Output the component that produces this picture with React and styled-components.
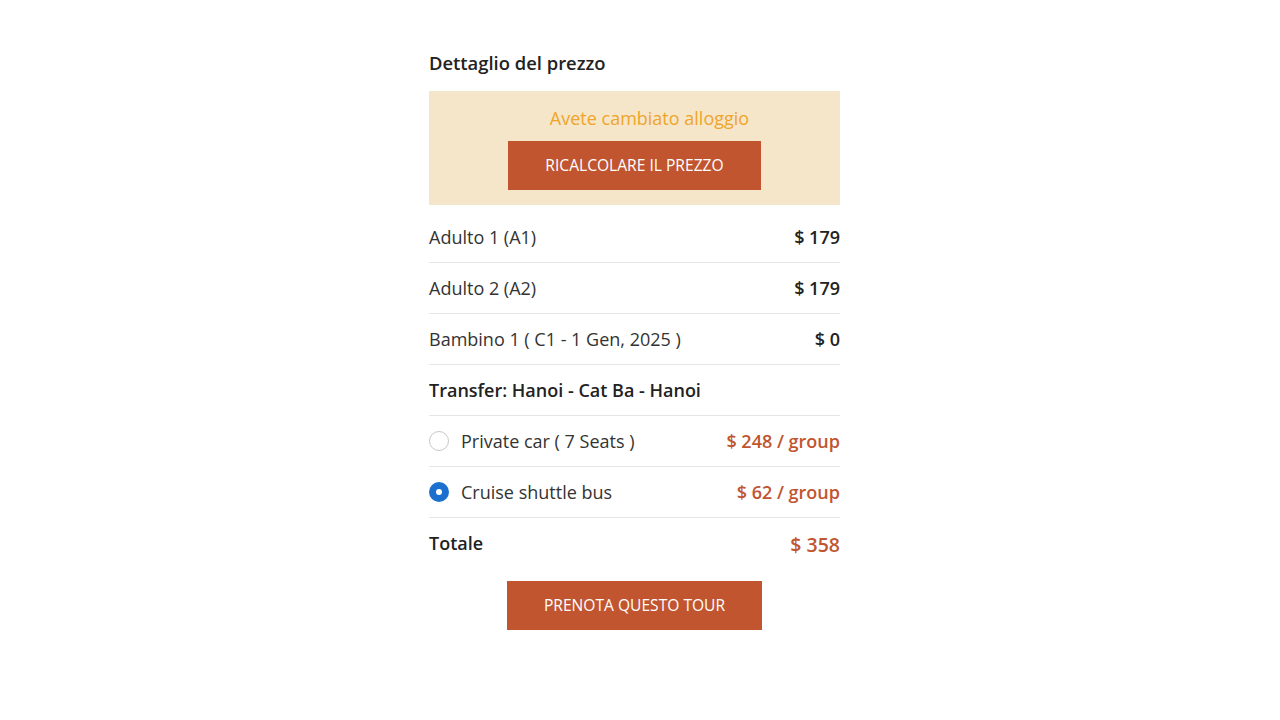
import styled, { createGlobalStyle } from "styled-components";

const GlobalStyle = createGlobalStyle`
    body {
        margin: 0;
        background: #fff;
        font-family: "Open Sans", "Noto Sans", sans-serif;
        color: #333;
    }
`;

const Page = styled.div`
    display: flex;
    justify-content: center;
    padding: 50px 11px 0 0;
`;

const Panel = styled.div`
    width: 411px;
    display: flex;
    flex-direction: column;
`;

const Title = styled.h3`
    margin: 0 0 15px;
    font-size: 18.4px;
    font-weight: 600;
    line-height: 26px;
    color: #222;
`;

const Notice = styled.div`
    background: #f5e6ca;
    display: flex;
    flex-direction: column;
    align-items: center;
    padding: 14px 0 15px;
    margin-bottom: 7px;
`;

const NoticeText = styled.span`
    color: #eea52b;
    font-size: 18px;
    line-height: 26px;
    margin: 0 0 10px 30px;
`;

const ActionButton = styled.button`
    background: #c0552f;
    color: #fff;
    border: none;
    border-radius: 0;
    width: ${(p) => p.width}px;
    height: 49px;
    padding: 0 0 2px;
    font-family: inherit;
    font-size: 15.6px;
    cursor: pointer;
    align-self: center;
`;

const Row = styled.div`
    display: flex;
    justify-content: space-between;
    align-items: center;
    height: 50px;
    border-bottom: 1px solid #e6e6e6;
    font-size: 18px;
`;

const Label = styled.span`
    display: flex;
    align-items: center;
    gap: 12px;
    font-weight: ${(p) => (p.bold ? 600 : 400)};
    color: ${(p) => (p.bold ? "#222" : "#333")};
`;

const Price = styled.span`
    font-weight: 600;
    font-size: ${(p) => p.size || 18}px;
    color: ${(p) => (p.accent ? "#c0552f" : "#222")};
`;

const Radio = styled.span`
    width: 20px;
    height: 20px;
    box-sizing: border-box;
    border-radius: 50%;
    border: ${(p) => (p.checked ? "none" : "1px solid #c8c8c8")};
    background: ${(p) => (p.checked ? "#1a6fcf" : "#fff")};
    display: flex;
    align-items: center;
    justify-content: center;

    &::after {
        content: "";
        display: ${(p) => (p.checked ? "block" : "none")};
        width: 6px;
        height: 6px;
        border-radius: 50%;
        background: #fff;
    }
`;

const TotalRow = styled.div`
    display: flex;
    justify-content: space-between;
    align-items: flex-start;
    height: 63px;
    padding-top: 13px;
    box-sizing: border-box;
`;

const TotalLabel = styled.span`
    font-size: 18px;
    font-weight: 600;
    color: #222;
`;

const passengers = [
    { label: "Adulto 1 (A1)", price: "$ 179" },
    { label: "Adulto 2 (A2)", price: "$ 179" },
    { label: "Bambino 1 ( C1 - 1 Gen, 2025 )", price: "$ 0" },
];

const transfers = [
    { label: "Private car ( 7 Seats )", price: "$ 248 / group", checked: false },
    { label: "Cruise shuttle bus", price: "$ 62 / group", checked: true },
];

const App = () => {
    return (
        <>
            <GlobalStyle />
            <Page>
                <Panel>
                    <Title>Dettaglio del prezzo</Title>
                    <Notice>
                        <NoticeText>Avete cambiato alloggio</NoticeText>
                        <ActionButton width={253}>RICALCOLARE IL PREZZO</ActionButton>
                    </Notice>
                    {passengers.map((p) => (
                        <Row key={p.label}>
                            <Label>{p.label}</Label>
                            <Price>{p.price}</Price>
                        </Row>
                    ))}
                    <Row>
                        <Label bold>Transfer: Hanoi - Cat Ba - Hanoi</Label>
                    </Row>
                    {transfers.map((t) => (
                        <Row key={t.label}>
                            <Label>
                                <Radio checked={t.checked} />
                                {t.label}
                            </Label>
                            <Price accent>{t.price}</Price>
                        </Row>
                    ))}
                    <TotalRow>
                        <TotalLabel>Totale</TotalLabel>
                        <Price accent size={19.5}>$ 358</Price>
                    </TotalRow>
                    <ActionButton width={255}>PRENOTA QUESTO TOUR</ActionButton>
                </Panel>
            </Page>
        </>
    );
};

export default App;
